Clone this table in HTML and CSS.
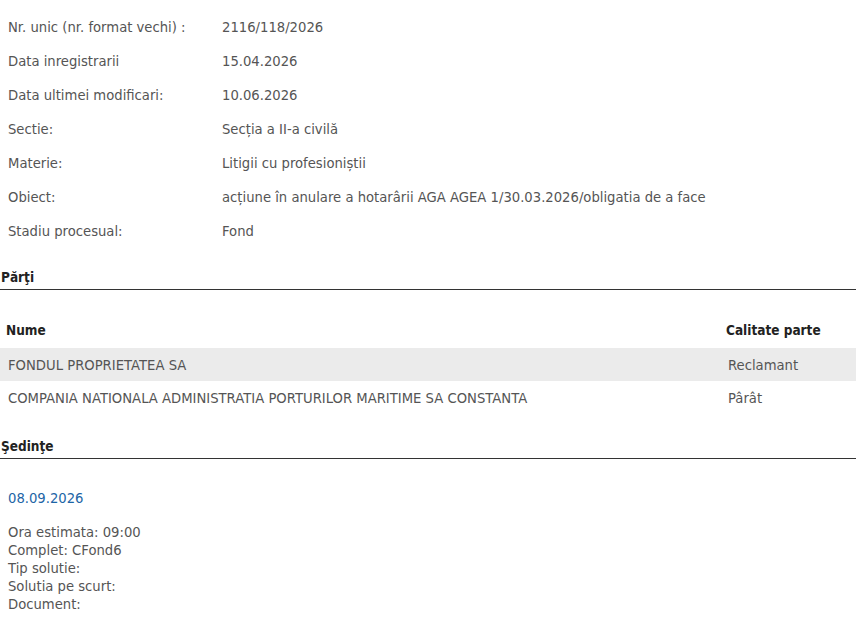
FILE: index.html
```html
<!DOCTYPE html>
<html lang="ro">
<head>
  <meta charset="UTF-8">
  <title>Dosar 2116/118/2026</title>
  <link rel="stylesheet" href="styles.css">
</head>
<body>
  <div class="page">
    <table class="info">
      <tr><td class="label">Nr. unic (nr. format vechi) :</td><td>2116/118/2026</td></tr>
      <tr><td class="label">Data inregistrarii</td><td>15.04.2026</td></tr>
      <tr><td class="label">Data ultimei modificari:</td><td>10.06.2026</td></tr>
      <tr><td class="label">Sectie:</td><td>Secția a II-a civilă</td></tr>
      <tr><td class="label">Materie:</td><td>Litigii cu profesioniștii</td></tr>
      <tr><td class="label">Obiect:</td><td>acțiune în anulare a hotarârii AGA AGEA 1/30.03.2026/obligatia de a face</td></tr>
      <tr><td class="label">Stadiu procesual:</td><td>Fond</td></tr>
    </table>

    <h3 class="section-title">Părţi</h3>
    <table class="parti">
      <thead>
        <tr><th>Nume</th><th class="col-calitate">Calitate parte</th></tr>
      </thead>
      <tbody>
        <tr class="odd"><td>FONDUL PROPRIETATEA SA</td><td>Reclamant</td></tr>
        <tr><td>COMPANIA NATIONALA ADMINISTRATIA PORTURILOR MARITIME SA CONSTANTA</td><td>Pârât</td></tr>
      </tbody>
    </table>

    <h3 class="section-title section-sedinte">Şedinţe</h3>
    <div class="sedinta">
      <div class="sedinta-data">08.09.2026</div>
      <div class="sedinta-detalii">
        Ora estimata: 09:00<br>
        Complet: CFond6<br>
        Tip solutie:<br>
        Solutia pe scurt:<br>
        Document:
      </div>
    </div>
  </div>
</body>
</html>
```

FILE: styles.css
```css
body {
  margin: 0;
  padding: 0;
  font-family: 'DejaVu Sans', sans-serif;
  font-size: 13.2px;
  color: #555;
  background: #fff;
}

.page {
  width: 856px;
  padding-top: 10px;
}

table {
  border-collapse: collapse;
}

.info td {
  height: 34px;
  padding: 0 0 0 8px;
  vertical-align: middle;
}

.info .label {
  width: 206px;
}

.section-title {
  margin: 0;
  padding: 21px 0 4px 1px;
  font-family: 'DejaVu Sans Condensed', 'DejaVu Sans', sans-serif;
  font-size: 13.5px;
  color: #222;
  border-bottom: 1px solid #333;
}

.section-sedinte {
  margin-top: 3px;
}

.parti {
  width: 100%;
  margin-top: 22px;
}

.parti th {
  text-align: left;
  color: #222;
  font-family: 'DejaVu Sans Condensed', 'DejaVu Sans', sans-serif;
  font-size: 13.5px;
  height: 36px;
  padding: 0 0 0 6px;
}

.parti td {
  height: 32px;
  padding: 1px 0 0 8px;
}

.parti .col-calitate {
  width: 130px;
}

.parti tr.odd {
  background: #ebebeb;
}

.sedinta {
  padding: 32px 8px 0;
}

.sedinta-data {
  color: #1d65a6;
  margin-bottom: 18px;
}

.sedinta-detalii {
  line-height: 18px;
}
```
